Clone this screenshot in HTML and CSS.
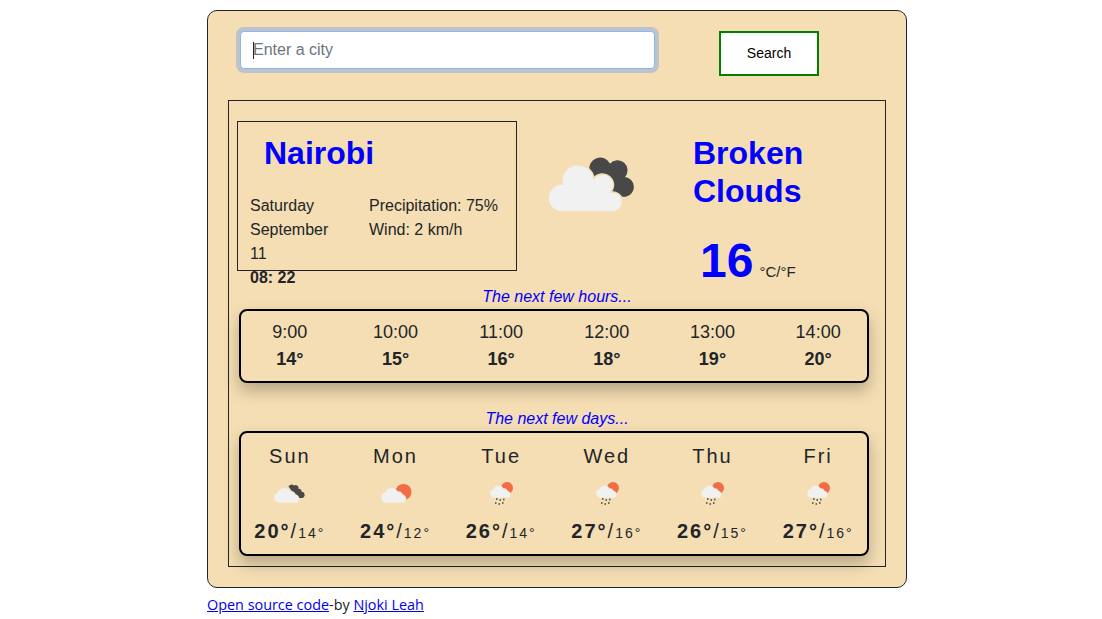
FILE: index.html
```html
<!DOCTYPE html>
<html lang="en">
<head>
    <meta charset="UTF-8">
    <meta name="viewport" content="width=device-width, initial-scale=1.0">
    <title>Weather App</title>
    <link rel="stylesheet" href="styles.css">
</head>
<body>
    <svg class="sprites" width="0" height="0" aria-hidden="true">
        <defs>
            <path id="small-cloud" d="M9.500 23 A5.500 5.500 0 0 1 8 12.200 A6.800 6.800 0 0 1 20.500 11.500 A4.500 4.500 0 0 1 25.500 14.500 A4.500 4.500 0 0 1 26.500 23 Z" fill="#f1f1f1" stroke="#f5deb3" stroke-width="0.600"/>
            <symbol id="icon-main" viewBox="0 0 100 75">
                <path d="M49.500 26 A11 11 0 0 1 70 18.500 A8.500 8.500 0 0 1 85 32 A10 10 0 0 1 86 51.700 L70 51.700 L55 42 Z" fill="#484848"/>
                <path d="M22 67 A14 14 0 0 1 22 39 A16 16 0 0 1 54 33 A10.500 10.500 0 0 1 71 47 A10 10 0 0 1 74 67 Z" fill="#f1f1f1" stroke="#f5deb3" stroke-width="1.500"/>
            </symbol>
            <symbol id="icon-broken" viewBox="0 0 40 28">
                <path d="M18.500 6.500 A3.500 3.500 0 0 1 24 5.500 A3 3 0 0 1 28.500 8.800 A2.800 2.800 0 0 1 31.500 11.500 A3.500 3.500 0 0 1 33 18 L27 18 Z" fill="#484848"/>
                <use href="#small-cloud"/>
            </symbol>
            <symbol id="icon-sun" viewBox="0 0 40 28">
                <circle cx="27.500" cy="12" r="8" fill="#f16d47"/>
                <use href="#small-cloud" transform="translate(1 0)"/>
            </symbol>
            <symbol id="icon-rain" viewBox="0 0 40 28">
                <circle cx="26" cy="8" r="6" fill="#f16d47"/>
                <use href="#small-cloud" transform="translate(5.700 -0.900) scale(0.820)"/>
                <g fill="#666">
                    <rect x="15" y="18" width="1.500" height="2"/>
                    <rect x="14" y="22" width="1.500" height="2"/>
                    <rect x="18.500" y="19" width="1.500" height="2"/>
                    <rect x="17.500" y="23" width="1.500" height="2"/>
                    <rect x="22" y="18.500" width="1.500" height="2"/>
                    <rect x="21" y="22" width="1.500" height="2"/>
                </g>
            </symbol>
        </defs>
    </svg>

    <div class="app">
        <form class="search">
            <div class="search-field">
                <input class="search-input" type="search" placeholder="Enter a city">
                <span class="caret"></span>
            </div>
            <button class="search-button" type="button">Search</button>
        </form>

        <div class="weather">
            <div class="today">
                <div class="place">
                    <h1 class="city">Nairobi</h1>
                    <div class="place-details">
                        <div class="date">
                            Saturday September 11<br>
                            <strong>08: 22</strong>
                        </div>
                        <ul class="stats">
                            <li>Precipitation: 75%</li>
                            <li>Wind: 2 km/h</li>
                        </ul>
                    </div>
                </div>
                <svg class="main-icon"><use href="#icon-main"/></svg>
                <div class="current">
                    <h2 class="description">Broken Clouds</h2>
                    <div class="temperature">
                        <span class="degrees">16</span>
                        <span class="units">°C/°F</span>
                    </div>
                </div>
            </div>

            <p class="caption">The next few hours...</p>
            <div class="panel hours">
                <div class="slot">9:00<strong>14°</strong></div>
                <div class="slot">10:00<strong>15°</strong></div>
                <div class="slot">11:00<strong>16°</strong></div>
                <div class="slot">12:00<strong>18°</strong></div>
                <div class="slot">13:00<strong>19°</strong></div>
                <div class="slot">14:00<strong>20°</strong></div>
            </div>

            <p class="caption caption-days">The next few days...</p>
            <div class="panel days">
                <div class="day">
                    <div class="day-name">Sun</div>
                    <svg class="day-icon"><use href="#icon-broken"/></svg>
                    <div class="day-temp"><strong>20°</strong>/<small>14°</small></div>
                </div>
                <div class="day">
                    <div class="day-name">Mon</div>
                    <svg class="day-icon"><use href="#icon-sun"/></svg>
                    <div class="day-temp"><strong>24°</strong>/<small>12°</small></div>
                </div>
                <div class="day">
                    <div class="day-name">Tue</div>
                    <svg class="day-icon"><use href="#icon-rain"/></svg>
                    <div class="day-temp"><strong>26°</strong>/<small>14°</small></div>
                </div>
                <div class="day">
                    <div class="day-name">Wed</div>
                    <svg class="day-icon"><use href="#icon-rain"/></svg>
                    <div class="day-temp"><strong>27°</strong>/<small>16°</small></div>
                </div>
                <div class="day">
                    <div class="day-name">Thu</div>
                    <svg class="day-icon"><use href="#icon-rain"/></svg>
                    <div class="day-temp"><strong>26°</strong>/<small>15°</small></div>
                </div>
                <div class="day">
                    <div class="day-name">Fri</div>
                    <svg class="day-icon"><use href="#icon-rain"/></svg>
                    <div class="day-temp"><strong>27°</strong>/<small>16°</small></div>
                </div>
            </div>
        </div>
    </div>

    <footer class="credits">
        <a href="#">Open source code</a>-by <a href="#">Njoki Leah</a>
    </footer>
</body>
</html>
```

FILE: styles.css
```css
/* General Styles */
body {
    margin: 0;
    font-family: "Liberation Sans", Arial, sans-serif;
    font-size: 16px;
    line-height: 1.5;
    color: #212529;
    background-color: #fff;
}
.sprites {
    position: absolute;
}
.app {
    box-sizing: border-box;
    width: 700px;
    height: 578px;
    margin: 10px 0 0 207px;
    padding: 20px 20px 0;
    background-color: #f5deb3;
    border: 1px solid #212529;
    border-radius: 10px;
}

/* Search */
.search {
    display: flex;
    align-items: flex-start;
    gap: 64px;
    margin-left: 12px;
}
.search-field {
    position: relative;
    display: flex;
}
.search-input {
    box-sizing: border-box;
    width: 415px;
    height: 38px;
    padding: 6px 12px;
    font-family: inherit;
    font-size: 16px;
    background-color: #fff;
    border: 1px solid #86b7fe;
    border-radius: 4px;
    outline: 0;
    box-shadow: 0 0 0 4px #bcc3c9;
    -webkit-appearance: none;
    appearance: none;
}
.search-input::placeholder {
    color: #6c757d;
    opacity: 1;
}
.caret {
    position: absolute;
    top: 11px;
    left: 13px;
    width: 1px;
    height: 17px;
    background-color: #212529;
}
.search-button {
    box-sizing: border-box;
    width: 100px;
    height: 45px;
    padding: 0 0 2px;
    font-family: inherit;
    font-size: 14px;
    color: #000;
    background-color: #fff;
    border: 2px solid green;
}

/* Weather box */
.weather {
    box-sizing: border-box;
    height: 467px;
    margin-top: 24px;
    padding: 20px 8px 0;
    border: 1px solid #212529;
}
.today {
    display: flex;
    height: 164px;
}
.place {
    box-sizing: border-box;
    flex: none;
    width: 280px;
    height: 150px;
    padding: 12px 12px 0;
    border: 1px solid #212529;
}
.city {
    margin: 0 0 22px 14px;
    font-size: 32px;
    line-height: 1.2;
    font-weight: bold;
    color: #00f;
}
.place-details {
    display: grid;
    grid-template-columns: 119px 1fr;
}
.date {
    width: 90px;
}
.stats {
    margin: 0;
    padding: 0;
    list-style: none;
}
.main-icon {
    flex: none;
    width: 100px;
    height: 75px;
    margin: 24px 0 0 23px;
}
.current {
    width: 160px;
    margin-left: 53px;
    padding-top: 13px;
}
.description {
    margin: 0 0 21px;
    font-size: 32px;
    line-height: 1.2;
    font-weight: bold;
    color: #00f;
}
.temperature {
    display: flex;
    align-items: baseline;
    gap: 6px;
    margin-left: 7px;
}
.degrees {
    font-size: 48px;
    line-height: 1.2;
    font-weight: bold;
    color: #00f;
}
.units {
    font-size: 15px;
    color: #212529;
}

/* Forecast */
.caption {
    margin: 0;
    text-align: center;
    font-style: italic;
    color: #00f;
}
.caption-days {
    margin-top: 24px;
}
.panel {
    display: grid;
    grid-template-columns: repeat(6, 105.67px);
    justify-content: center;
    box-sizing: border-box;
    width: 630px;
    margin: 0 0 0 2px;
    padding: 8px 0;
    text-align: center;
    border: 2px solid #000;
    border-radius: 8px;
    box-shadow: 0 8px 16px rgba(0, 0, 0, 0.25);
}
.slot {
    font-size: 18px;
}
.slot strong {
    display: block;
}
.day-name {
    font-size: 20px;
    letter-spacing: 2px;
}
.day-icon {
    display: block;
    width: 40px;
    height: 28px;
    margin: 9px auto 8px;
}
.day-temp {
    font-size: 20px;
    letter-spacing: 2px;
}
.day-temp small {
    font-size: 14px;
}

/* Footer */
.credits {
    margin: 6px 0 0 207px;
    font-family: "Open Sans", "Noto Sans", sans-serif;
    font-size: 14.4px;
}
.credits a {
    color: #00e;
}
```
